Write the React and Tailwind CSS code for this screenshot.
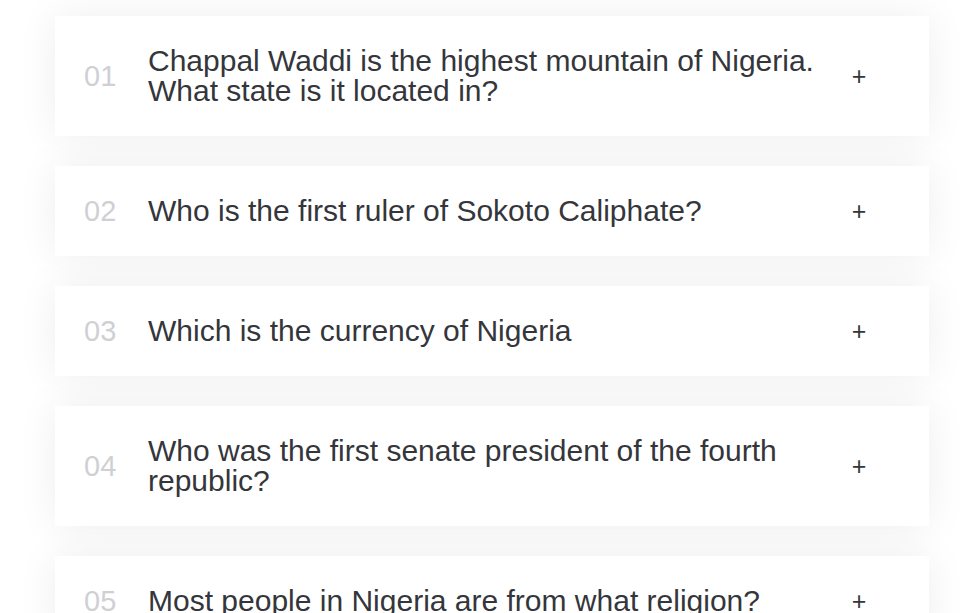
import React, { useState } from "react";

const questions = [
  { id: "01", text: "Chappal Waddi is the highest mountain of Nigeria. What state is it located in?" },
  { id: "02", text: "Who is the first ruler of Sokoto Caliphate?" },
  { id: "03", text: "Which is the currency of Nigeria" },
  { id: "04", text: "Who was the first senate president of the fourth republic?" },
  { id: "05", text: "Most people in Nigeria are from what religion?" },
];

const FaqItem = ({ item }) => {
  const [open, setOpen] = useState(false);
  return (
    <div
      className="bg-white flex items-center py-[30px] pl-[29px] pr-[40px] shadow-[0_0_40px_rgba(0,0,0,0.07)] cursor-pointer"
      onClick={() => setOpen(!open)}
    >
      <span className="w-[64px] shrink-0 text-[29px] leading-[30px] text-[#cfd0d4]">{item.id}</span>
      <p className="flex-1 text-[30px] leading-[30px] text-[#34363b]">{item.text}</p>
      <span className="w-[60px] shrink-0 text-center text-[25px] leading-[30px] text-[#34363b]">
        {open ? "−" : "+"}
      </span>
    </div>
  );
};

const App = () => {
  return (
    <div className="min-h-screen bg-white pt-[16px] font-['Liberation_Sans',Arial,sans-serif]">
      <div className="ml-[55px] w-[874px] flex flex-col gap-[30px]">
        {questions.map(q => (
          <FaqItem key={q.id} item={q} />
        ))}
      </div>
    </div>
  );
};

export default App;
